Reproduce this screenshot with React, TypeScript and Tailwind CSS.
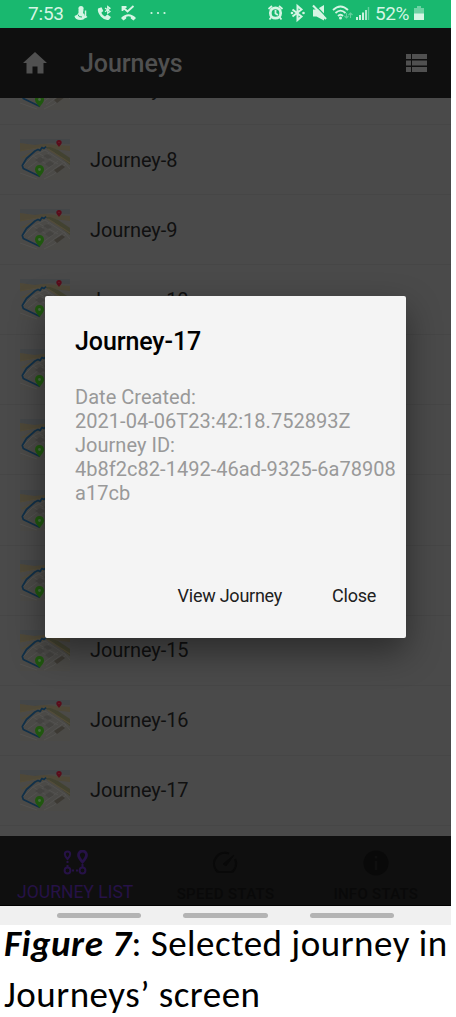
import React from "react";

const journeys = [7, 8, 9, 10, 11, 12, 13, 14, 15, 16, 17];

function MapThumb() {
  return (
    <svg width="50" height="41" viewBox="0 0 50 41" className="block shrink-0">
      <rect width="50" height="41" fill="#4b4a47" />
      <path d="M0 0H50V5L30 4L16 6L0 4Z" fill="#434648" />
      <path d="M0 4L14 6L25 5L50 7V12L34 10L24 8L0 12Z" fill="#4e4838" />
      <path d="M24 8L34 13L50 26V19L38 11L30 8Z" fill="#424230" />
      <path d="M0 12L16 9L28 7M2 19L12 13L24 10M28 10L50 24" stroke="#534c38" strokeWidth="1.2" fill="none" />
      <path d="M3 27L13 17L25 11L46 25L34 35L24 40M8 29L29 14M13 17L31 28M18 14L38 25M22 34L38 22M26 36L44 23L50 30M0 34L17 40" stroke="#535250" strokeWidth="1" fill="none" />
      <path d="M15 21L20 18L25 21L20 24ZM23 17L27 15L32 18L28 20ZM25 25L30 22L34 25L29 28Z" fill="#444340" />
      <path d="M34 31L42 26L45 28L37 34Z" fill="#3c3933" />
      <path d="M20 37.500L3.300 29.500L2.300 26.500L6.500 19.500L15 12L18 10.500L20 11.500L22 8.500L24 9.500L26 7.500" stroke="#103049" strokeWidth="1.700" fill="none" strokeLinejoin="round" />
      <path d="M19.500 38C17.500 35 15 33.500 15 30.500A4.500 4.500 0 0 1 24 30.500C24 33.500 21.500 35 19.500 38Z" fill="#20570f" />
      <circle cx="19.500" cy="30.500" r="1.400" fill="#4b6744" />
      <path d="M39 8C38 6 36.300 5.500 36.300 3.600A2.700 2.700 0 0 1 41.700 3.600C41.700 5.500 40 6 39 8Z" fill="#590d1b" />
      <circle cx="39" cy="3.500" r=".6" fill="#6a3039" />
    </svg>
  );
}

function StatusBar() {
  return (
    <div className="flex h-7 shrink-0 bg-[#19b86f] text-[#d5f5e4]">
      <div className="w-[46px] shrink-0 pl-7 text-[19px] leading-7 tracking-[-0.2px]">7:53</div>
      <svg width="220" height="28" viewBox="46 0 220 28" fill="currentColor" className="shrink-0">
        <g>
          <circle cx="81" cy="8.500" r="2.600" />
          <path d="M78.500 10H83.500L83 13Q85 14 85 17Q85 20 80.500 20Q75 20 74.500 16Q76.500 16 78.500 13Z" />
          <path d="M85.500 10.500V18M83 15Q84 19 87 16.500" stroke="currentColor" strokeWidth="1.500" fill="none" />
          <path d="M78 14.500Q78.500 17.500 82 17" stroke="#19b86f" fill="none" />
        </g>
        <path d="M98 8.500L101.500 7.200L103.300 11L101.300 12.800Q102.500 15.500 105 16.500L107.300 14.500L111 16.900L109 19.800Q105 21 101 16.800Q97 12 98 8.500Z" />
        <path d="M105 8L110 11.500L107.700 13.300V6.500L110 8.200L105 11.700" stroke="currentColor" strokeWidth="1.200" fill="none" />
        <path d="M122.500 7L127.500 11.500L133.500 6M122.500 11V7H126.500" stroke="currentColor" strokeWidth="1.800" fill="none" />
        <path d="M121 18Q128.500 10.500 136 18L133.500 20.500L130.800 18.500V16.700Q128.500 15.800 126.200 16.700V18.500L123.500 20.500Z" />
        <circle cx="151.500" cy="13" r="1.100" /><circle cx="158" cy="13" r="1.100" /><circle cx="164.500" cy="13" r="1.100" />
      </svg>
      <svg width="110" height="28" viewBox="265 0 110 28" fill="none" stroke="currentColor" className="shrink-0">
        <circle cx="274.500" cy="13" r="5.200" strokeWidth="2.700" />
        <path d="M267.500 9L271 6M278 6L281.500 9M270.500 17L268.500 19.500M278.500 17L280.500 19.500M274.500 10V13.500L277 15" strokeWidth="1.800" />
        <path d="M291.500 9.500L300.500 16.500L296.500 20V6L300.500 9.500L291.500 16.500" strokeWidth="2" />
        <circle cx="291" cy="13" r="1.300" fill="currentColor" stroke="none" /><circle cx="302.500" cy="13" r="1.300" fill="currentColor" stroke="none" />
        <path d="M312 9.500H315.500L323 5V20.500L315.500 16.500H312Z" fill="currentColor" stroke="none" />
        <path d="M313.500 4.500L326.500 18" stroke="#19b86f" strokeWidth="1.200" />
        <path d="M312 5.500L325 19" strokeWidth="2" />
        <path d="M332 10Q339.500 3 347 10M334.500 13Q339.500 8.300 344.500 13M337 16Q339.500 13.500 342 16" strokeWidth="1.800" />
        <circle cx="339.500" cy="18" r="1.500" fill="currentColor" stroke="none" />
        <g opacity=".4" strokeWidth="1.100"><path d="M345.500 13V18M343.500 16L345.500 18L347.500 16M349.500 18V13M347.500 15L349.500 13L351.500 15" /></g>
        <path d="M356 17V20M359 15V20M362 12.500V20" strokeWidth="1.900" />
        <path d="M365 10V20" strokeWidth="1.900" opacity=".85" /><path d="M367.500 7V20" strokeWidth="1.400" opacity=".4" />
      </svg>
      <span className="-ml-[1px] w-[34px] whitespace-nowrap text-[19px] leading-7 tracking-[-0.4px]">52%</span>
      <svg width="12" height="28" viewBox="412 0 12 28" className="ml-[4px]" fill="currentColor">
        <path d="M413 8H416V6H420V8H423V20H413Z" opacity=".45" /><path d="M413 13.500H423V20H413Z" />
      </svg>
    </div>
  );
}

function TabBar() {
  return (
    <div className="grid h-[70px] shrink-0 grid-cols-3 border-b border-black bg-[#0f0f0f] text-center text-[17px] leading-5 text-[#090909]">
      <div className="flex flex-col items-center pt-[14px] text-[#261247]">
        <svg width="26" height="26" viewBox="0 0 26 26" fill="none" stroke="currentColor" strokeWidth="2">
          <path d="M5.500 9Q2.800 6 2.800 4.200A2.700 2.700 0 0 1 8.200 4.200Q8.200 6 5.500 9Z" />
          <path d="M20.500 12Q16.500 7.500 16.500 5A4 4 0 0 1 24.500 5Q24.500 7.500 20.500 12Z" strokeWidth="2.800" />
          <circle cx="5.500" cy="20.500" r="2.900" /><circle cx="20.500" cy="20.500" r="2.900" />
          <path d="M5.500 11V13M5.500 15V17M10 20.500H12M14 20.500H16M20.500 14V17" />
        </svg>
        <span className="mt-[6px] whitespace-nowrap text-[17.500px]">JOURNEY LIST</span>
      </div>
      <div className="flex flex-col items-center pt-[14px]">
        <svg width="26" height="26" viewBox="0 0 26 26" fill="none" stroke="currentColor" strokeWidth="2.200">
          <path d="M17 3.500A11 11 0 0 0 4 20Q5 22 7 22H19Q21 22 22 20A11 11 0 0 0 23 9" /><path d="M11 14L22 5L14 16Z" fill="currentColor" strokeWidth="1" />
        </svg>
        <span className="mt-[8px] whitespace-nowrap text-[15px] font-medium tracking-[0.35px]">SPEED STATS</span>
      </div>
      <div className="flex flex-col items-center pt-[14px]">
        <svg width="26" height="26" viewBox="0 0 26 26"><circle cx="13" cy="13" r="12.500" fill="currentColor" /><path d="M11.700 11H14.300V20H11.700ZM11.700 6H14.300V8.500H11.700Z" fill="#0f0f0f" /></svg>
        <span className="mt-[8px] whitespace-nowrap text-[15px] font-medium tracking-[0.3px]">INFO STATS</span>
      </div>
    </div>
  );
}

export default function App() {
  return (
    <main className="h-[1017px] w-[456px] overflow-hidden bg-white font-['Roboto',sans-serif]">
      <section className="relative flex h-[925px] w-[451px] flex-col overflow-hidden">
        <StatusBar />
        <header className="flex h-[70px] shrink-0 items-center bg-[#0f0f0f] pr-[24px] pl-[23px] text-[#505050]">
          <svg width="24" height="22" viewBox="0 0 24 22" fill="currentColor"><path d="M12 0L24 11H20.500V21.500H14.500V14.500H9.500V21.500H3.500V11H0Z" /></svg>
          <h1 className="mt-[2px] ml-[33px] text-[25px] font-medium tracking-[-0.05px]">Journeys</h1>
          <svg width="21" height="18" viewBox="0 0 21 18" fill="currentColor" className="ml-auto"><path d="M0 0H5V5H0ZM6 0H21V5H6ZM0 6.500H5V11.500H0ZM6 6.500H21V11.500H6ZM0 13H5V18H0ZM6 13H21V18H6Z" /></svg>
        </header>
        <div className="h-[738px] shrink-0 overflow-hidden bg-[#4a4a4a]">
          <ul className="-mt-[43.100px]">
            {journeys.map((n) => (
              <li key={n} className="flex h-[70.1px] items-center border-b border-[#464646] pl-5 text-[20px] tracking-[-0.07px] text-[#101010]">
                <MapThumb />
                <span className="ml-5">Journey-{n}</span>
              </li>
            ))}
          </ul>
        </div>
        <TabBar />
        <div className="flex h-[19px] shrink-0 gap-[42px] bg-[#f0f0f0] pt-[7px] pl-[57px]">
          {[0, 1, 2].map((n) => <span key={n} className="h-[5px] w-[84.400px] rounded-full bg-[#b4b4b4]" />)}
        </div>
        <div role="dialog" className="absolute top-[296px] left-[45px] flex h-[342px] w-[361px] flex-col rounded-[2px] bg-[#f4f4f4] pl-[30px] shadow-[0_14px_34px_rgba(0,0,0,0.42)]">
          <h2 className="mt-[31px] text-[25px] leading-[30px] font-medium tracking-[-0.1px] text-black">Journey-17</h2>
          <p className="mt-[29px] text-[20px] leading-[23.900px] tracking-[0.03px] whitespace-nowrap text-[#999999]">
            Date Created:<br />2021-04-06T23:42:18.752893Z<br />Journey ID:<br />4b8f2c82-1492-46ad-9325-6a78908<br />a17cb
          </p>
          <div className="mt-auto mb-[30px] flex justify-end gap-[50px] pr-[30px] text-[18px] leading-6 tracking-[-0.25px] text-[#202020]">
            <button>View Journey</button><button>Close</button>
          </div>
        </div>
      </section>
      <p className="-mt-[7px] pl-[4px] font-['Carlito','Lato',sans-serif] text-[37px] leading-[51px] tracking-[0.5px] whitespace-nowrap text-black">
        <span className="block"><b className="italic">Figure 7</b>: Selected journey in</span>
        <span className="block">Journeys’ screen</span>
      </p>
    </main>
  );
}
